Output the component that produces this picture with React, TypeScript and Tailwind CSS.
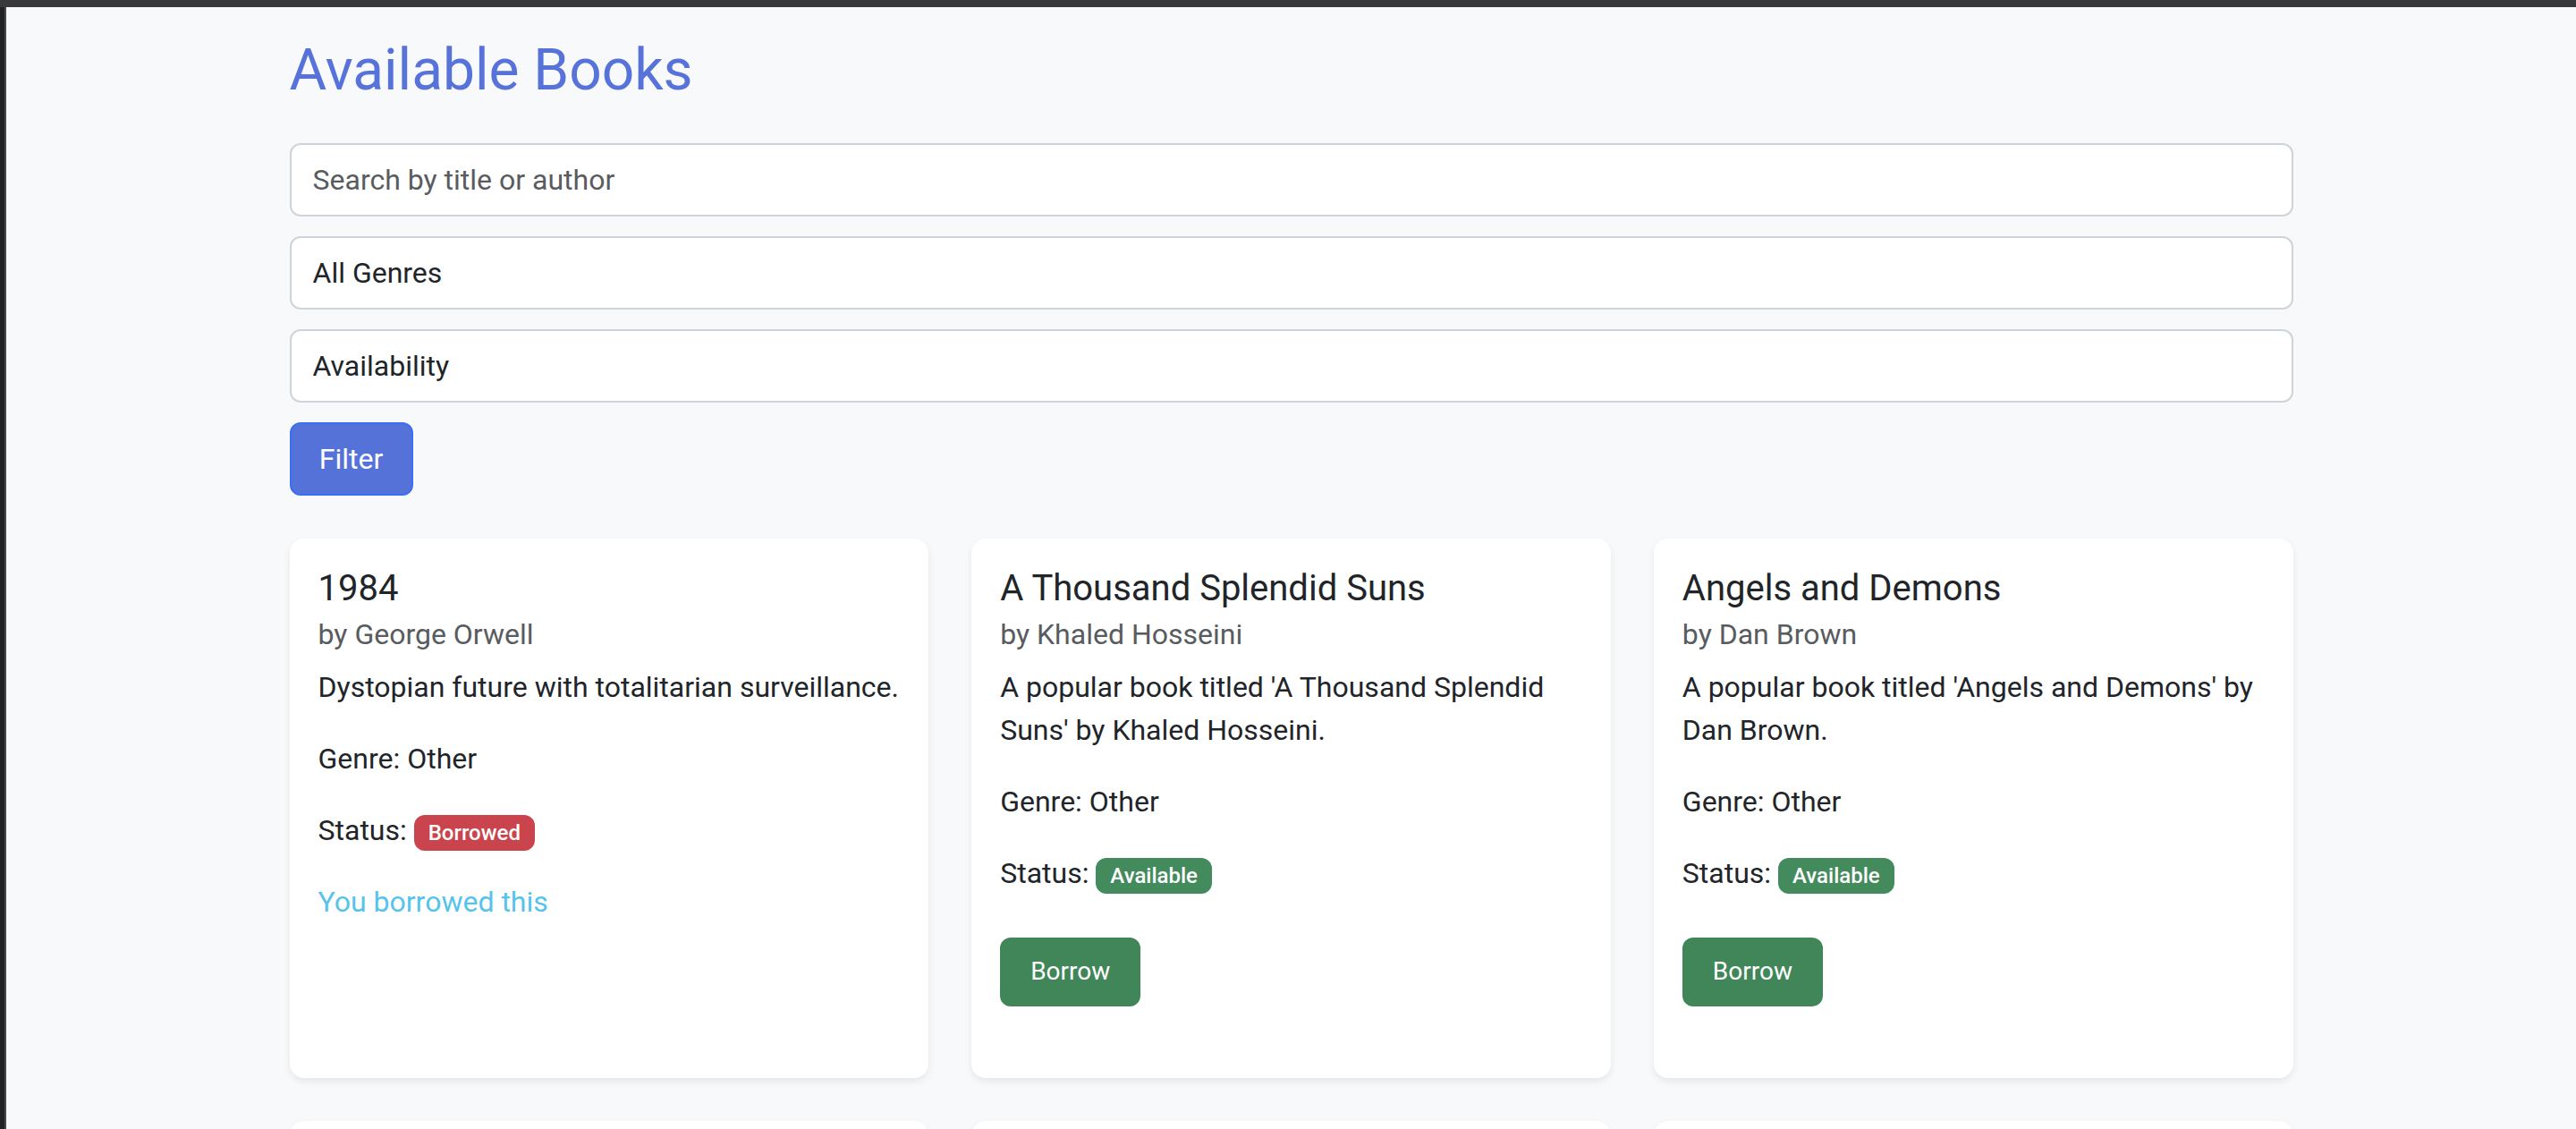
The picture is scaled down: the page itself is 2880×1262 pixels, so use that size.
import React from "react";

type Book = {
  title: string;
  author: string;
  description: string;
  genre: string;
  available: boolean;
  borrowedByMe?: boolean;
};

const books: Book[] = [
  {
    title: "1984",
    author: "George Orwell",
    description: "Dystopian future with totalitarian surveillance.",
    genre: "Other",
    available: false,
    borrowedByMe: true,
  },
  {
    title: "A Thousand Splendid Suns",
    author: "Khaled Hosseini",
    description:
      "A popular book titled 'A Thousand Splendid Suns' by Khaled Hosseini.",
    genre: "Other",
    available: true,
  },
  {
    title: "Angels and Demons",
    author: "Dan Brown",
    description: "A popular book titled 'Angels and Demons' by Dan Brown.",
    genre: "Other",
    available: true,
  },
  {
    title: "Animal Farm",
    author: "George Orwell",
    description: "A popular book titled 'Animal Farm' by George Orwell.",
    genre: "Other",
    available: true,
  },
  {
    title: "Brave New World",
    author: "Aldous Huxley",
    description: "A popular book titled 'Brave New World' by Aldous Huxley.",
    genre: "Other",
    available: true,
  },
  {
    title: "Crime and Punishment",
    author: "Fyodor Dostoevsky",
    description:
      "A popular book titled 'Crime and Punishment' by Fyodor Dostoevsky.",
    genre: "Other",
    available: true,
  },
];

const BookCard: React.FC<{ book: Book }> = ({ book }) => {
  return (
    <div className="flex flex-col rounded-[16px] bg-white p-[32px] shadow-[0_4px_8px_rgba(0,0,0,0.075)]">
      <h5 className="mb-[8px] text-[40px] leading-[48px] font-normal text-[#212529]">
        {book.title}
      </h5>
      <h6 className="mb-[16px] text-[32px] leading-[38px] font-normal text-[#595c5f]">
        by {book.author}
      </h6>
      <p className="mb-[32px] text-[32px] leading-[48px] text-[#212529]">
        {book.description}
      </p>
      <p className="mb-[32px] text-[32px] leading-[48px] text-[#212529]">
        Genre: {book.genre}
      </p>
      <p className="mb-[32px] text-[32px] leading-[48px] text-[#212529]">
        Status:{" "}
        {book.available ? (
          <span className="inline-block rounded-[12px] bg-[#438a5c] px-[16px] py-[8px] text-[24px] leading-none font-medium text-white">
            Available
          </span>
        ) : (
          <span className="inline-block rounded-[12px] bg-[#c9444c] px-[16px] py-[8px] text-[24px] leading-none font-medium text-white">
            Borrowed
          </span>
        )}
      </p>
      {book.borrowedByMe ? (
        <p className="mb-[32px] text-[32px] leading-[48px] text-[#56c3ec]">
          You borrowed this
        </p>
      ) : book.available ? (
        <div className="mt-[16px] mb-[48px]">
          <button className="h-[77px] rounded-[12px] border-2 border-[#418659] bg-[#418659] px-[32px] text-[28px] leading-[42px] text-white">
            Borrow
          </button>
        </div>
      ) : null}
    </div>
  );
};

const App: React.FC = () => {
  return (
    <div className="flex min-h-screen flex-col bg-[#f8f9fa] font-['Roboto','Liberation_Sans',sans-serif]">
      <div className="h-[8px] bg-[#39393c]" />
      <div className="flex flex-1">
        <div className="w-[7px] border-r-2 border-[#4a4a4d] bg-[#232325]" />
        <main className="flex-1">
          <div className="mx-auto w-[2240px] pt-[33px] pb-[48px]">
            <h2 className="mb-[42px] text-[64px] leading-[1.2] font-normal text-[#5773d9]">
              Available Books
            </h2>

            <form className="flex flex-col gap-[22px]">
              <input
                type="text"
                placeholder="Search by title or author"
                className="h-[82px] w-full rounded-[12px] border-2 border-[#ced4da] bg-white px-[24px] text-[32px] text-[#212529] outline-none placeholder:text-[#595c5f]"
              />
              <select className="h-[82px] w-full appearance-none rounded-[12px] border-2 border-[#ced4da] bg-white px-[24px] text-[32px] text-[#212529] outline-none">
                <option>All Genres</option>
                <option>Fiction</option>
                <option>Other</option>
              </select>
              <select className="h-[82px] w-full appearance-none rounded-[12px] border-2 border-[#ced4da] bg-white px-[24px] text-[32px] text-[#212529] outline-none">
                <option>Availability</option>
                <option>Available</option>
                <option>Borrowed</option>
              </select>
              <div>
                <button
                  type="button"
                  className="h-[82px] w-[138px] rounded-[12px] border-2 border-[#3b6ef0] bg-[#5572d8] text-[32px] text-white"
                >
                  Filter
                </button>
              </div>
            </form>

            <div className="mt-[48px] grid grid-cols-3 gap-[48px]">
              {books.map((book) => (
                <BookCard key={book.title} book={book} />
              ))}
            </div>
          </div>
        </main>
      </div>
    </div>
  );
};

export default App;
